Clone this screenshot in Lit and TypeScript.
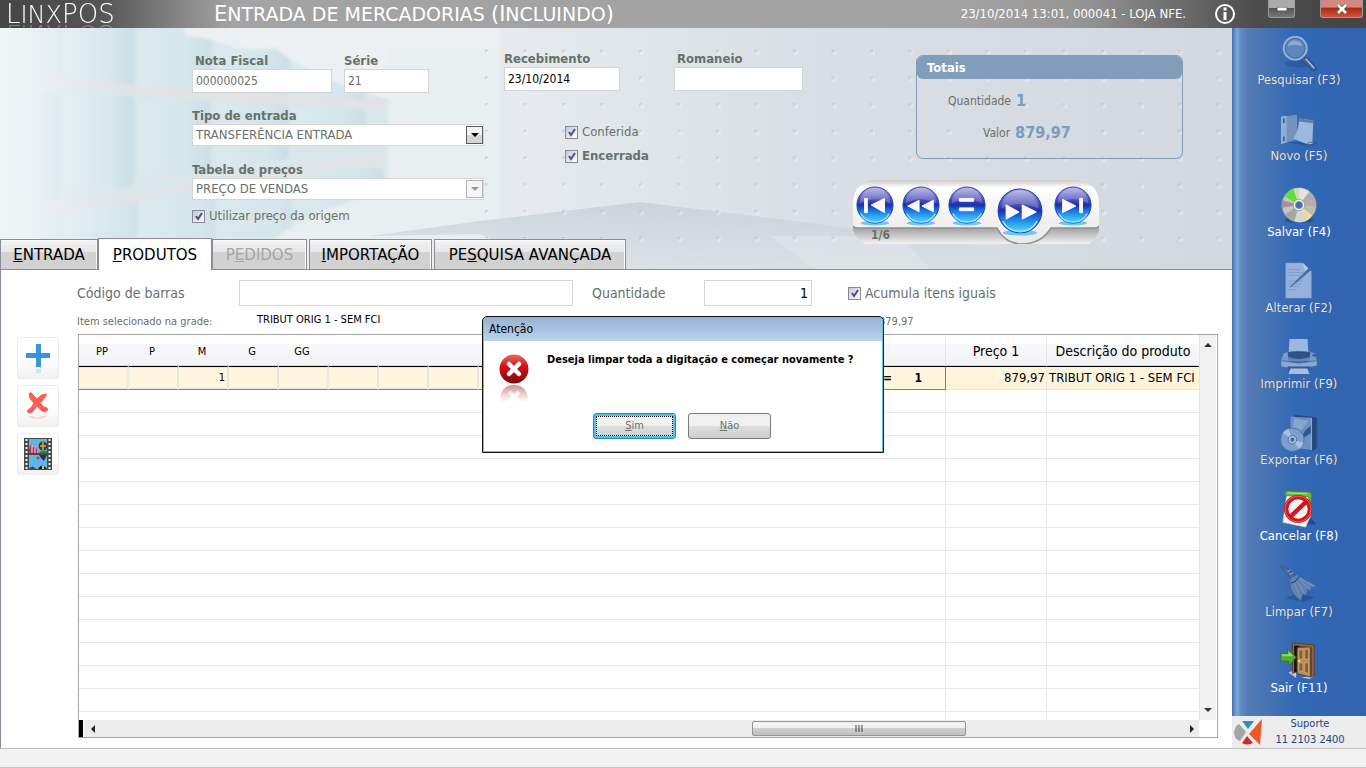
import { LitElement, html, svg, css } from "lit";
import { customElement } from "lit/decorators.js";
import { classMap } from "lit/directives/class-map.js";

const actions = [
  { id: "search", label: "Pesquisar (F3)", on: false },
  { id: "new", label: "Novo (F5)", on: false },
  { id: "save", label: "Salvar (F4)", on: true },
  { id: "edit", label: "Alterar (F2)", on: false },
  { id: "print", label: "Imprimir (F9)", on: false },
  { id: "export", label: "Exportar (F6)", on: false },
  { id: "cancel", label: "Cancelar (F8)", on: true },
  { id: "clear", label: "Limpar (F7)", on: false },
  { id: "exit", label: "Sair (F11)", on: true },
];

const icons: Record<string, unknown> = {
  search: svg`
    <ellipse cx="19" cy="31" rx="14" ry="4" fill="#1d4583" opacity=".35"/>
    <path d="M24 25 L28 24 L39 36 L36 39 L32 37 L23 28z" fill="#3c5f93" stroke="#27466f" stroke-width=".8"/>
    <path d="M27 26 L36 36" stroke="#a9c1df" stroke-width="1.6"/>
    <circle cx="16" cy="15" r="12" fill="#5c86bf" stroke="#8fafd6" stroke-width="2.4"/>
    <circle cx="16" cy="15" r="10.4" fill="none" stroke="#3c66a3" stroke-width=".9"/>
    <path d="M8 13 Q10 6 17 7 Q24 8 23 13 Q15 10 8 13z" fill="#a5c0e2" opacity=".6"/>`,
  new: svg`
    <path d="M6 34 L34 38 L40 34z" fill="#1f467f" opacity=".6"/>
    <path d="M1 7 L18 5 L18 31 L1 36z" fill="#7293c0"/>
    <path d="M18 5 L36 8 L36 36 L18 31z" fill="#3f68a5"/>
    <path d="M1 7 L7 6 L7 34 L1 36z" fill="#8faed6"/>
    <path d="M4 9 V33" stroke="#34547f" stroke-width="1.6" stroke-dasharray="5 14"/>
    <path d="M20 9 L35 11 L34 36 L29 36 Q20 33 14 30 Q20 22 20 9z" fill="#9bb8df"/>
    <path d="M20 9 L35 11 V14 L20 12z" fill="#5e80b0"/>
    <path d="M28 36 Q30 33 34 34" stroke="#44699f" fill="none"/>`,
  save: svg`
    <ellipse cx="20" cy="36" rx="15" ry="3" fill="#123768" opacity=".5"/>
    <circle cx="20" cy="20" r="18" fill="#c6c7c4" stroke="#8d9290"/>
    <path d="M20 20 L5 11 A18 18 0 0 1 14 3z" fill="#5fe238"/>
    <path d="M20 20 L14 3 A18 18 0 0 1 20 2z" fill="#cfd9b8"/>
    <path d="M20 20 L20 2 A18 18 0 0 1 31 6z" fill="#e2e2e1"/>
    <path d="M20 20 L31 6 A18 18 0 0 1 37 14z" fill="#adaeac"/>
    <path d="M20 20 L37 14 A18 18 0 0 1 38 22z" fill="#c2a6ae"/>
    <path d="M20 20 L38 22 A18 18 0 0 1 34 31z" fill="#b4c0ac"/>
    <path d="M20 20 L34 31 A18 18 0 0 1 27 37z" fill="#f3d9a4"/>
    <path d="M20 20 L27 37 A18 18 0 0 1 15 37z" fill="#d6d6d4"/>
    <path d="M20 20 L15 37 A18 18 0 0 1 5 30z" fill="#a6a8a6"/>
    <path d="M20 20 L2 23 A18 18 0 0 1 3 15z" fill="#a8909a"/>
    <circle cx="20" cy="20" r="6" fill="#f2f2f2" stroke="#8a8e90" stroke-width=".7"/>
    <circle cx="20" cy="20" r="3.8" fill="#3d6fb5" stroke="#7d8fa8" stroke-width=".7"/>`,
  edit: svg`
    <path d="M6 1 H24 L33 10 V38 H6z" fill="#95b2dc" stroke="#7798c8" stroke-width=".6"/>
    <path d="M24 1 L26 9 L33 10z" fill="#b5cbe8"/>
    <path d="M9 8 H22 M9 11 H24 M9 14 H21 M9 20 H24 M9 23 H22 M9 26 H20 M9 29 H17" stroke="#7e9cca" stroke-width="1"/>
    <path d="M11 26 L31 6 L34 5 L33 8 L14 24z" fill="#4a6da3" stroke="#34568b" stroke-width=".6"/>`,
  print: svg`
    <path d="M10 1 H29 L30 18 H9z" fill="#9ab7de"/>
    <path d="M4 16 L10 14 H30 L36 16 L39 24 H1z" fill="#7a9ac9"/>
    <path d="M8 15 Q19 13 32 15 L31 22 Q20 28 9 22z" fill="#2f5185"/>
    <path d="M9 20 Q20 24 31 20 L31 23 Q20 27 9 23z" fill="#6586b4"/>
    <path d="M1 24 L9 25 Q20 28 31 25 L39 24 V29 Q20 35 1 30z" fill="#89a8d4" stroke="#4c6fa4" stroke-width=".6"/>
    <path d="M34 18 l3 1" stroke="#2c4c7e" stroke-width="1.6"/>
    <path d="M8 30 H32 L31 34 H9z" fill="#37598c"/>
    <path d="M11 32 H29 L31 38 H9z" fill="#a4bfe3"/>`,
  export: svg`
    <path d="M15 1 L34 3 L39 4 V36 L33 39z" fill="#25487f"/>
    <path d="M11 3 L33 4 V38 L11 35z" fill="#6d91c4"/>
    <path d="M15 5 L30 7 L18 22 H12z" fill="#8cabd6" opacity=".8"/>
    <path d="M22 27 Q24 17 33 12 V20 Q27 23 22 27z" fill="#30568f"/>
    <path d="M33 4 V38" stroke="#a1bbdd"/>
    <circle cx="13" cy="27" r="12.4" fill="#7d9ece" stroke="#4d72a8"/>
    <path d="M13 27 L3 20 A12 12 0 0 1 9 15.500z M13 27 L25 30 A12 12 0 0 1 20 37z" fill="#a7c0e2"/>
    <circle cx="13" cy="27" r="4.500" fill="#a7c0e2" stroke="#50719f"/>
    <circle cx="13" cy="27" r="2.200" fill="#3d68a8"/>`,
  cancel: svg`
    <path d="M10 36 L38 36 L33 30z" fill="#14386e" opacity=".6"/>
    <path d="M7 5 H32 V28 L27 39 L3 34z" fill="#f1f2ef" stroke="#b9bdb9" stroke-width=".6"/>
    <path d="M5 28 L3 34 L27 39 L29 33z" fill="#fff" stroke="#b9bdb9" stroke-width=".6"/>
    <path d="M10 12 H28 M10 16 H28 M9 20 H28 M9 24 H28" stroke="#d2d6d2"/>
    <path d="M7 1 L30 2 Q35 3 33 9 L32 18 L30 7 L6 6 Q4 3 7 1z" fill="#69b93d" stroke="#3f8a22" stroke-width=".8"/>
    <path d="M8 3 L29 4" stroke="#b7e28f" stroke-width="1.200"/>
    <circle cx="19" cy="20" r="12.500" fill="#fff" fill-opacity=".4" stroke="#d3161d" stroke-width="4.600"/>
    <circle cx="19" cy="20" r="13.600" fill="none" stroke="#f17a72" stroke-width=".8"/>
    <path d="M11 28 L28 12" stroke="#d3161d" stroke-width="4.600"/>`,
  clear: svg`
    <path d="M6 34 L24 38 L36 33 L20 28z" fill="#1d437c" opacity=".5"/>
    <path d="M1 1 L4 0 L16 10 L13 14z" fill="#4d6c9a" stroke="#2e4e80" stroke-width=".7"/>
    <path d="M8 6 L11 4 M10 9 L14 7" stroke="#91abd0"/>
    <path d="M11 13 L18 9 Q26 15 38 20 L36 23 L33 22 L33 26 L29 25 L28 31 L24 30 L22 37 Q11 29 10 18z" fill="#6181b1" stroke="#3c5f95" stroke-width=".7"/>
    <path d="M14 16 L21 33 M17 15 L26 29 M19 13 L31 24 M21 13 L35 21" stroke="#7b99c4" stroke-width="1"/>
    <path d="M11 18 Q17 17 20 11" stroke="#2f5083" fill="none" stroke-width="1.500"/>`,
  exit: svg`
    <path d="M9 32 L17 29 V38z M22 37 L36 36 L31 39z" fill="#c5c8cf"/>
    <path d="M13 1 L36 3 V35 L33 37 V6 L16 4 V32 L13 33z" fill="#946439" stroke="#4c2f17" stroke-width=".7"/>
    <path d="M15 4 L20 4 V32 H15z" fill="#101010"/>
    <path d="M18 6 L32 5 V37 L18 33z" fill="#bd8d5d" stroke="#62401f" stroke-width=".9"/>
    <path d="M20 9 L24 8 V18 L20 18z M26 8 L30 8 V18 L26 18z M20 22 H24 V31 L20 30z M26 22 H30 V33 L26 32z" fill="#8a5e34" stroke="#dbb48a" stroke-width=".6"/>
    <circle cx="20" cy="20" r="1.200" fill="#f0e2c8"/>
    <path d="M1 12 H8 V7 L17 16 L9 25 V20 H1z" fill="#4fae2b" stroke="#2b7a13" stroke-width=".8"/>
    <path d="M2 13 H9 V10 L14 15 H2z" fill="#93da6c"/>`,
};

const navGlyphs = [
  { name: "Primeiro", big: false, g: svg`<path d="M9 13h3v15h-3z M30 13v15L16 20z"/>` },
  { name: "Anterior", big: false, g: svg`<path d="M18 15v12L6 21z M33 15v12L21 21z"/>` },
  { name: "Lista", big: false, g: svg`<path d="M12 13h15v3H12z M12 23h15v3H12z"/>` },
  { name: "Próximo", big: true, g: svg`<path d="M8 15v12L19 21z M22 15v12L34 21z"/>` },
  { name: "Último", big: false, g: svg`<path d="M9 14v14L23 21z M27 13h3v15h-3z"/>` },
];

const tabs = [
  { cls: "t1", pre: "", key: "E", post: "ntrada" },
  { cls: "t2", pre: "", key: "P", post: "rodutos" },
  { cls: "t3", pre: "P", key: "e", post: "didos" },
  { cls: "t4", pre: "", key: "I", post: "mportação" },
  { cls: "t5", pre: "Pe", key: "s", post: "quisa Avançada" },
];

@customElement("app-root")
export class AppRoot extends LitElement {
  static styles = css`
    :host {
      display: flex;
      flex-direction: column;
      height: 100vh;
      overflow: hidden;
      background: #fff;
      color: #68706a;
      font: 12px/16px "DejaVu Sans Condensed", "Noto Sans", sans-serif;
    }
    * { box-sizing: border-box; }
    button, input, select { font: inherit; color: inherit; margin: 0; border-radius: 0; }
    button { padding: 0; border: 0; background: none; }
    svg { display: block; }
    .wide { font-family: "DejaVu Sans", sans-serif; text-transform: uppercase; white-space: nowrap; }
    .tabs button { text-transform: inherit; }

    .titlebar {
      display: flex;
      align-items: center;
      height: 28px;
      flex: none;
      color: #fff;
      background: linear-gradient(90deg, #454545 0, #555 100px, #a3a3a3 230px, #a3a3a3 calc(100% - 400px), #949494 calc(100% - 280px), #4c4c4c calc(100% - 110px), #444);
    }
    .brand {
      width: 206px;
      padding-left: 6px;
      font-family: "DejaVu Sans Light", "DejaVu Sans", sans-serif;
      font-weight: 200;
      font-size: 26px;
      line-height: 22px;
      height: 22px;
      -webkit-box-reflect: below -2px linear-gradient(transparent 40%, rgba(255, 255, 255, 0.4));
    }
    .brand span { font-size: 24px; }
    .title { flex: 1; padding-left: 8px; margin: 0; font-size: 19px; font-weight: 400; line-height: 24px; }
    .title span { font-size: 21px; }
    .session { font-size: 13px; }
    .info { margin: 0 32px 0 28px; }
    .win { align-self: flex-start; display: grid; place-items: center; height: 18px; border: 1px solid #9b9b9b; border-top: 0; border-radius: 0 0 3px 3px; }
    .min { width: 27px; margin-right: 25px; background: linear-gradient(#aaa 45%, #555 50%, #777); }
    .close { width: 43px; margin-right: 3px; background: linear-gradient(#d08a80 40%, #b02a14 50%, #cf523c); }

    .body { flex: 1; display: flex; min-height: 0; }
    .main { flex: 1; display: flex; flex-direction: column; min-width: 0; }
    .top { position: relative; flex: none; height: 242px; }
    .scene { position: absolute; inset: 0; width: 100%; height: 100%; }
    .form { position: relative; display: flex; padding-left: 192px; }
    .colA { width: 292px; margin: 25px 20px 0 0; }
    .colB { width: 299px; margin: 23px 50px 0 0; }
    .row { display: flex; }
    .field { display: flex; flex-direction: column; }
    .field label { font-weight: 700; font-size: 13px; line-height: 16px; padding-left: 3px; }
    .field.flush label { padding-left: 0; }
    .txt { height: 24px; border: 1px solid #d5d5d8; background: #fff; padding: 0 3px; width: 100%; }
    .nota { width: 140px; margin-right: 12px; }
    .serie { width: 85px; }
    .nota, .serie { margin-bottom: 15px; }
    .serie label, .rec label { padding-left: 0; }
    .rec { width: 116px; margin-right: 54px; }
    .rom { width: 129px; }
    .black { color: #000; }
    .combo { position: relative; margin-bottom: 16px; }
    .combo select { appearance: none; width: 100%; height: 22px; border: 1px solid #d5d5d8; background: #fff; padding: 0 24px 0 3px; opacity: 1; color: #68706a; font-size: 13px; }
    .arrow { position: absolute; right: 1px; top: 2px; width: 17px; height: 18px; border: 1px solid #5c5c5c; background: linear-gradient(#f4f4f4 50%, #d6d6d6 50%); display: grid; place-items: center; pointer-events: none; }
    .arrow.off { border-color: #b5b5b5; background: #f5f5f5; }
    .check { display: flex; align-items: center; gap: 4px; font-size: 13px; }
    .check.low { margin-top: -8px; }
    .check.item { font-size: 14px; }
    .check input {
      appearance: none;
      width: 13px;
      height: 13px;
      border: 1px solid #8a8a8a;
      background: url("data:image/svg+xml,%3Csvg xmlns='http://www.w3.org/2000/svg' viewBox='0 0 11 11'%3E%3Cpath d='M3 5l2 3 4-6' fill='none' stroke='%233f519b' stroke-width='2'/%3E%3C/svg%3E") center / 11px no-repeat, linear-gradient(135deg, #c2c8d2, #fff);
    }
    .checks { display: flex; flex-direction: column; gap: 8px; padding: 33px 0 0 61px; }
    .strong { font-weight: 700; }

    .totals { margin: 27px 0 21px 63px; width: 267px; height: 104px; border: 1px solid #7f9cba; border-radius: 7px; }
    .totals h2 { margin: 0; height: 23px; padding-left: 10px; border-radius: 6px; background: #809db9; color: #fff; font-size: 13px; line-height: 24px; }
    .totals dl { display: grid; gap: 12px; margin: 0; padding-top: 12px; }
    .totals div { display: flex; align-items: center; gap: 5px; }
    .totals div + div { padding-left: 35px; }
    .totals dt { padding-left: 31px; }
    .totals dd { margin: 0; font-weight: 700; font-size: 16px; line-height: 20px; color: #7a9cbf; }

    .player { position: relative; width: 246px; height: 64px; margin: 0; padding: 6px 3px 0; display: flex; align-items: flex-start; gap: 8px; }
    .shell { position: absolute; inset: 0; }
    .player button { position: relative; width: 38px; height: 40px; border-radius: 50%; }
    .player .big { width: 46px; height: 50px; margin: 1px 3px 0; }
    .count { position: absolute; left: 18px; bottom: 1px; font-weight: 700; }

    .tabs { position: relative; flex: none; display: flex; align-items: flex-end; height: 32px; margin-top: -32px; border-bottom: 1px solid #8b8b9b; font-size: 15px; color: #000; }
    .tabs button { height: 30px; border: 1px solid #8b8b9b; border-bottom: 0; background: linear-gradient(#f3f3f3 0, #e6e6e6 40%, #d3d3d3 42%, #d0d0d0); line-height: 28px; box-shadow: inset -1px 1px #fbfbfb; }
    .tabs .cur { height: 32px; margin-bottom: -1px; background: #fff; }
    .tabs .off { color: #a5a5a5; }
    .t1 { width: 98px; } .t2 { width: 114px; } .t3 { width: 95px; } .t4 { width: 123px; margin: 0 2px; } .t5 { width: 192px; }

    .work { flex: 1; min-height: 0; display: grid; grid-template-columns: 77px minmax(0, 1fr); grid-template-rows: auto minmax(0, 1fr); border-left: 1px solid #8b8b9b; padding: 10px 14px 10px 0; }
    .head { grid-column: 2; margin-left: -1px; }
    .entry { display: flex; align-items: center; font-size: 14px; height: 26px; }
    .entry .lab { width: 162px; }
    .entry .code { width: 334px; height: 26px; margin-right: 19px; }
    .entry .qlab { width: 112px; }
    .entry .qty { width: 108px; height: 26px; margin-right: 36px; text-align: right; }
    .sel { display: flex; font-size: 11px; height: 28px; align-items: center; padding-top: 3px; }
    .sel span { width: 180px; }
    .sel b { font-weight: 400; color: #000; flex: 0 1 622px; padding-bottom: 3px; }
    .tools { display: flex; flex-direction: column; gap: 6px; padding: 3px 0 0 16px; }
    .tools button { width: 42px; height: 42px; border: 1px solid #ececec; border-radius: 2px; display: grid; place-items: center; background: linear-gradient(#fff 50%, #f1f1f1); }

    .grid { display: grid; grid-template-columns: minmax(0, 1fr) 17px; grid-template-rows: minmax(0, 1fr) 17px; border: 1px solid #a5a5ab; padding-right: 1px; color: #000; }
    .scroll { overflow: hidden; }
    table { width: 100%; table-layout: fixed; border-collapse: separate; border-spacing: 0; }
    .c50 { width: 50px; } .cPrice { width: 101px; } .cDesc { width: 152px; }
    th { height: 31px; padding: 3px 4px 0 0; font-weight: 400; font-size: 11px; border-bottom: 1px solid #d4d4d8; background: linear-gradient(#fff 9px, #f6f8fb 9px, #f1f3f5); }
    th.lg { font-size: 14px; padding: 1px 0 0; }
    th.sep, td.sep { border-right: 1px solid #e6e6e6; }
    td { height: 23px; padding: 0; border-bottom: 1px solid #e9e9e9; }
    .cur td { height: 24px; border-top: 1px solid #000; background: #fff4dc; border-bottom: 1px solid #857f7d; font-size: 13px; }
    .cur .size { border-right: 2px solid #e6e6e8; text-align: right; padding-right: 2px; font-size: 11px; box-shadow: inset 0 1px #e6e6e8, inset 0 -1px #e6e6e8; }
    .cur .sum { text-align: right; font-weight: 700; padding-right: 23px; white-space: pre; border-right-color: #857f7d; font-size: 12px; }
    .cur .price { text-align: right; padding-right: 1px; border-bottom-color: #e6e6e8; white-space: nowrap; }
    .cur .desc { padding-left: 2px; border-bottom-color: #e6e6e8; white-space: nowrap; }
    .vbar { display: flex; flex-direction: column; justify-content: space-between; align-items: center; background: #f0f0f0; border-left: 1px solid #e3e3e3; padding: 6px 0; }
    .hbar { display: flex; align-items: center; background: #ececec; }
    .split { width: 5px; height: 17px; background: #000; border-right: 1px solid #fff; margin-right: 5px; }
    .track { flex: 1; display: flex; justify-content: flex-end; padding-right: 222px; }
    .thumb { width: 214px; height: 15px; border: 1px solid #949494; border-radius: 2px; display: grid; place-items: center; background: linear-gradient(#f2f2f2 45%, #cfcfd2 50%, #bfbfc2); }
    .hend { margin-right: 3px; }

    .side { width: 134px; flex: none; display: flex; flex-direction: column; color: #fff; background: linear-gradient(90deg, #3f70b5 0, #80a8d8 5px, #5f8bc4 9px, #557ab5 16px, #4f78b4 24px, #3168b5 64px, #3263ae 100%); }
    .actions { flex: 1; min-height: 0; display: flex; flex-direction: column; padding-top: 6px; }
    .act { flex: none; height: 76px; display: flex; flex-direction: column; align-items: center; font-size: 13px; color: #fff; }
    .act.dim { color: #dfe5ef; text-shadow: 1px 0 #4a4f5e; }
    .act svg { flex: none; }
    .support { flex: none; display: flex; align-items: center; height: 32px; background: #ececec; color: #1c4484; font-size: 11px; line-height: 16px; }
    .support a { flex: 1; text-align: center; color: inherit; text-decoration: none; padding-right: 8px; }
    .status { height: 20px; flex: none; background: #f1f1f1; border-top: 1px solid #bdbdbd; border-bottom: 1px solid #c4c4c4; }

    .overlay { position: fixed; inset: 0; display: grid; place-items: center; }
    .dialog { width: 402px; height: 137px; border: 1px solid #101010; border-radius: 5px 5px 0 0; background: #fff; color: #000; box-shadow: inset 0 0 0 1px #5ec5e4; overflow: hidden; }
    .dialog h1 { margin: 1px 1px 0; height: 23px; padding-left: 5px; font-size: 12px; font-weight: 400; line-height: 22px; background: linear-gradient(#98b3d3, #bbd2ec); }
    .msg { display: flex; gap: 18px; padding: 13px 0 0 16px; height: 72px; }
    .msg p { margin: -2px 0 0; font-size: 11px; font-weight: 700; }
    .btns { display: flex; justify-content: center; gap: 12px; padding-right: 2px; color: #68706a; }
    .btns button { width: 83px; height: 26px; border: 1px solid #7a7a7a; border-radius: 3px; background: linear-gradient(#f0f0f0 48%, #dedede 50%, #cecece); font-size: 11px; }
    .btns .def { border-color: #3c7fb1; box-shadow: inset 0 0 0 2px #48c8ee; outline: 1px dotted #000; outline-offset: -4px; }
  `;

  private caret(fill: string, dir = "down") {
    const d = { down: "M0 2h8L4 6z", up: "M0 6h8L4 2z", left: "M6 0v8L2 4z", right: "M2 0v8L6 4z" }[dir];
    return html`<svg width="8" height="8" viewBox="0 0 8 8" aria-hidden="true"><path d=${d!} fill=${fill}></path></svg>`;
  }

  private scene() {
    const cols = [0, 62, 138, 216, 292];
    return html`<svg class="scene" viewBox="0 0 1232 242" preserveAspectRatio="none" aria-hidden="true">
      <defs>
        <linearGradient id="sky"><stop offset="0" stop-color="#eaf2f4"/><stop offset=".32" stop-color="#e9edf1"/><stop offset=".42" stop-color="#e6eaee"/><stop offset=".65" stop-color="#d9dfe4"/><stop offset="1" stop-color="#d3d8df"/></linearGradient>
        <linearGradient id="glass"><stop offset="0" stop-color="#dbe9ee"/><stop offset=".7" stop-color="#d4e5eb"/><stop offset="1" stop-color="#cadfe6"/></linearGradient>
        <linearGradient id="fade"><stop offset="0" stop-color="#f0f6f7"/><stop offset="1" stop-color="#f0f6f7" stop-opacity="0"/></linearGradient>
        <linearGradient id="roof" x2="0" y2="1"><stop offset="0" stop-color="#c5ced5"/><stop offset="1" stop-color="#dae0e5"/></linearGradient>
        <pattern id="dots" x="485" y="22" width="38.500" height="26.700" patternUnits="userSpaceOnUse"><path d="M0 3V.500H3" fill="none" stroke="#b5bdc4"/><path d="M1 4h3V1" fill="none" stroke="#f2f5f7"/></pattern>
        <filter id="soft"><feGaussianBlur stdDeviation="1.500"/></filter>
      </defs>
      <rect width="1232" height="242" fill="url(#sky)"/>
      <g filter="url(#soft)">
        <path d="M-5 -5H400V250H-5z" fill="#d9e6ea"/>
        ${cols.map((x, i) => svg`
          <rect x=${x} y="-6" width="73" height=${60 + i * 5} rx="8" fill="url(#glass)"/>
          <rect x=${x} y=${64 + i * 4} width=${i === 0 ? 60 : 73} height=${108 - i * 17} rx="8" fill="url(#glass)"/>
          <rect x=${x} y=${184 - i * 11} width=${i === 0 ? 76 : 92} height="80" rx="8" fill="url(#glass)"/>`)}
        <path d="M-5 56 L60 52 L140 62 L292 72 L390 76" fill="none" stroke="#e3e1e4" stroke-width="8" opacity=".8"/>
        <path d="M-5 180 L70 181 L160 164 L385 128" fill="none" stroke="#e3e1e4" stroke-width="6" opacity=".8"/>
        <path d="M182 -5H500V70H384Q310 50 276 20Q260 22 236 20Q205 8 186 8z" fill="#ecf0f3"/>
        <path d="M388 20 V160 L320 184 L290 200 L240 234 L190 250 H500 V20z" fill="#e9eef1"/>
      </g>
      <rect width="120" height="242" fill="url(#fade)"/>
      <path d="M370 208 L480 193 L640 174 L850 200 L1000 222 V242 H560 L480 206z" fill="url(#roof)" opacity=".75"/>
      <path d="M770 208 H900 L930 242 H815z" fill="#dfe4e9" opacity=".7"/>
      <rect x="484" width="748" height="220" fill="url(#dots)" opacity=".75"/>
    </svg>`;
  }

  private player() {
    return html`<nav class="player" aria-label="Registros">
      <svg class="shell" width="246" height="64" viewBox="0 0 246 64" aria-hidden="true">
        <defs>
          <linearGradient id="sh" x2="0" y2="1"><stop offset="0" stop-color="#c9c9c9"/><stop offset=".12" stop-color="#fff"/><stop offset=".5" stop-color="#f4f4f4"/><stop offset="1" stop-color="#e9e9e9"/></linearGradient>
          <linearGradient id="lo" x2="0" y2="1"><stop offset=".4" stop-color="#aaa"/><stop offset="1" stop-color="#f2f2f2"/></linearGradient>
        </defs>
        <path d="M0 40H246V50Q244 59 236 64H12Q2 58 0 50z" fill="url(#lo)"/>
        <path d="M22 0H222Q246 2 246 24V45Q246 48 241 48H198Q188 64 169 64Q152 64 144 48H5Q0 48 0 45V24Q0 2 22 0z" fill="url(#sh)"/>
        <path d="M0 46Q1 48 5 48H144Q152 64 169 64Q188 64 198 48H241Q245 48 246 46" fill="none" stroke="#8f8f8f" stroke-width="1.500"/>
      </svg>
      ${navGlyphs.map((n) => html`<button class=${classMap({ big: n.big })} aria-label=${n.name}>
        <svg width=${n.big ? 46 : 38} height=${n.big ? 50 : 40} viewBox="0 0 40 42" aria-hidden="true">
          <defs>
            <linearGradient id="orb" x2="0" y2="1"><stop offset="0" stop-color="#b0b0e4"/><stop offset=".3" stop-color="#5a5cc0"/><stop offset=".5" stop-color="#1c2fa8"/><stop offset=".65" stop-color="#1674e0"/><stop offset="1" stop-color="#4fe0ff"/></linearGradient>
          </defs>
          <ellipse cx="20" cy="39" rx="15" ry="2.500" fill="#6cc8f2"/>
          <circle cx="20" cy="20" r="19" fill="url(#orb)" stroke="#2a3cae" stroke-width="1"/>
          <path d="M4 18A16 16 0 0 1 36 18Q28 14 20 14Q12 14 4 18z" fill="#fff" opacity=".2"/>
          <path d="M5 29A17 17 0 0 0 35 29" fill="none" stroke="#a5f0ff" stroke-width="1.500" opacity=".8"/>
          <g fill="#fbf8f4" stroke="#fbf8f4" stroke-linejoin="round">${n.g}</g>
        </svg></button>`)}
      <span class="count">1/6</span>
    </nav>`;
  }

  render() {
    const sizes = ["PP", "P", "M", "G", "GG", "", "", ""];
    return html`
      <header class="titlebar">
        <div class="brand wide">L<span>inx</span>POS</div>
        <h1 class="title wide"><span>E</span>ntrada de mercadorias <span>(I</span>ncluindo<span>)</span></h1>
        <span class="session">23/10/2014 13:01, 000041 - LOJA NFE.</span>
        <button class="info" aria-label="Informações"><svg width="22" height="22" viewBox="0 0 22 22"><circle cx="11" cy="11" r="9" fill="none" stroke="#fff" stroke-width="2"/><path d="M9.500 9h3v8h-3z M9.500 4.500h3v3h-3z" fill="#fff"/></svg></button>
        <button class="win min" aria-label="Minimizar"><svg width="10" height="4" viewBox="0 0 10 4"><path d="M0 0h10v4H0z" fill="#fff" stroke="#555"/></svg></button>
        <button class="win close" aria-label="Fechar"><svg width="12" height="10" viewBox="0 0 12 10"><path d="M2 1l8 8M10 1L2 9" stroke="#553" stroke-width="4"/><path d="M2 1l8 8M10 1L2 9" stroke="#fff" stroke-width="2.600"/></svg></button>
      </header>
      <div class="body">
        <main class="main">
          <section class="top">
            ${this.scene()}
            <div class="form">
              <div class="colA">
                <div class="row">
                  <div class="field nota"><label for="nota">Nota Fiscal</label><input id="nota" class="txt" value="000000025"></div>
                  <div class="field serie"><label for="serie">Série</label><input id="serie" class="txt" value="21"></div>
                </div>
                <div class="field flush"><label for="tipo">Tipo de entrada</label>
                  <div class="combo"><select id="tipo"><option>TRANSFERÊNCIA ENTRADA</option></select><span class="arrow">${this.caret("#000")}</span></div></div>
                <div class="field flush"><label for="tabela">Tabela de preços</label>
                  <div class="combo"><select id="tabela" disabled><option>PREÇO DE VENDAS</option></select><span class="arrow off">${this.caret("#999")}</span></div></div>
                <label class="check low"><input type="checkbox" checked>Utilizar preço da origem</label>
              </div>
              <div class="colB">
                <div class="row">
                  <div class="field rec"><label for="rec">Recebimento</label><input id="rec" class="txt black" value="23/10/2014"></div>
                  <div class="field rom"><label for="rom">Romaneio</label><input id="rom" class="txt"></div>
                </div>
                <div class="checks">
                  <label class="check"><input type="checkbox" checked>Conferida</label>
                  <label class="check strong"><input type="checkbox" checked>Encerrada</label>
                </div>
              </div>
              <div>
                <section class="totals"><h2>Totais</h2>
                  <dl><div><dt>Quantidade</dt><dd>1</dd></div><div><dt>Valor</dt><dd>879,97</dd></div></dl>
                </section>
                ${this.player()}
              </div>
            </div>
          </section>
          <div class="tabs wide" role="tablist">
            ${tabs.map((t, i) => html`<button role="tab" class="${t.cls} ${i === 1 ? "cur" : ""} ${i === 2 ? "off" : ""}" aria-selected=${i === 1} ?disabled=${i === 2}>${t.pre}<u>${t.key}</u>${t.post}</button>`)}
          </div>
          <section class="work">
            <div class="head">
              <div class="entry">
                <label class="lab" for="code">Código de barras</label><input id="code" class="txt code">
                <label class="qlab" for="qty">Quantidade</label><input id="qty" class="txt qty black" value="1">
                <label class="check item"><input type="checkbox" checked>Acumula itens iguais</label>
              </div>
              <div class="sel"><span>Item selecionado na grade:</span><b>TRIBUT ORIG 1 - SEM FCI</b><span>879,97</span></div>
            </div>
            <div class="tools">
              <button aria-label="Adicionar"><svg width="26" height="32" viewBox="0 0 26 32"><path d="M11 2h5v9h9v5h-9v9h-5v-9H1v-5h10z" fill="#3b93dd"/><path d="M11 27h5v4h-5z" fill="#3b93dd" opacity=".2"/></svg></button>
              <button aria-label="Remover"><svg width="26" height="30" viewBox="0 0 26 30"><path d="M4 3Q6 0 8 4L12 8Q16 3 21 3Q23 4 15 12Q19 17 22 17Q24 20 19 21Q16 20 12 15Q9 20 6 22Q1 22 3 19Q7 17 9 12Q4 8 4 3z" fill="#fb6058" stroke="#fb6058"/><path d="M3 25h5l4 2 4-2h6l-5 3H8z" fill="#fb6058" opacity=".2"/></svg></button>
              <button aria-label="Foto"><svg width="28" height="32" viewBox="0 0 28 32"><path d="M0 0h28v32H0z" fill="#4a4a44"/><path d="M2.500 1V32M25.500 1V32" stroke="#f2f2ea" stroke-width="2" stroke-dasharray="2 2"/><path d="M5 1h18v14H5zM5 17h18v14H5z" fill="#5ab9ea"/><path d="M5 15V11l2-5 2 4 2-4 2 6v3z" fill="#cf2f4e"/><path d="M8 7v8M11 7v8" stroke="#e9d7f0"/><circle cx="19" cy="8" r="4.500" fill="#39432c"/><path d="M16 8h6M19 4v8" stroke="#f2a52e" stroke-width="1.500"/><path d="M15 15l2-2h6v2z" fill="#3f7f39"/><path d="M15 17h8l-3 6-3-3z" fill="#3a2c2c"/><circle cx="14" cy="20" r="1.500" fill="#d8383c"/><path d="M5 31q3-5 7 0z" fill="#3c3f6c"/><path d="M14 31q4-7 9 0z" fill="#1a1718"/><path d="M18 31v-3h2v3z" fill="#f2b82e"/></svg></button>
            </div>
            <div class="grid">
              <div class="scroll"><table>
                <colgroup>${sizes.map(() => html`<col class="c50">`)}<col><col class="cPrice"><col class="cDesc"></colgroup>
                <thead><tr>${sizes.map((s) => html`<th>${s}</th>`)}<th class="sep"></th><th class="lg sep">Preço 1</th><th class="lg">Descrição do produto</th></tr></thead>
                <tbody>
                  <tr class="cur">${sizes.map((s) => html`<td class="size">${s === "M" ? "1" : ""}</td>`)}<td class="sum sep">=      1</td><td class="price sep">879,97</td><td class="desc">TRIBUT ORIG 1 - SEM FCI</td></tr>
                  ${Array.from({ length: 40 }, () => html`<tr><td colspan="9" class="sep"></td><td class="sep"></td><td></td></tr>`)}
                </tbody>
              </table></div>
              <div class="vbar">${this.caret("#333", "up")}${this.caret("#333")}</div>
              <div class="hbar"><span class="split"></span>${this.caret("#222", "left")}<div class="track"><div class="thumb"><svg width="9" height="7" viewBox="0 0 9 7"><path d="M1 0v7M4 0v7M7 0v7" stroke="#444"/></svg></div></div><span class="hend">${this.caret("#222", "right")}</span></div>
            </div>
          </section>
        </main>
        <aside class="side">
          <div class="actions">
            ${actions.map((a) => html`<button class=${classMap({ act: true, dim: !a.on })}><svg width="38" height="38" viewBox="0 0 40 40" aria-hidden="true">${icons[a.id]}</svg>${a.label}</button>`)}
          </div>
          <div class="support">
            <svg width="30" height="30" viewBox="0 0 30 30" aria-hidden="true"><path d="M10 4h12l-6 8z" fill="#2f8fc4"/><path d="M7 7l7 8-6 9Q2 22 2 15Q3 9 7 7z" fill="#a3a5a7"/><path d="M30 2L28 28 17 17z" fill="#ea5b25"/><path d="M15 19l6 7q-6 3-11 0z" fill="#d32b2b"/></svg>
            <a href="tel:1121032400">Suporte<br>11 2103 2400</a>
          </div>
        </aside>
      </div>
      <footer class="status"></footer>
      <div class="overlay"><section class="dialog" role="alertdialog" aria-labelledby="dt" aria-describedby="dm">
        <h1 id="dt">Atenção</h1>
        <div class="msg">
          <svg width="30" height="50" viewBox="0 0 30 50" aria-hidden="true">
            <defs>
              <linearGradient id="red" x2="0" y2="1"><stop offset="0" stop-color="#ee6a66"/><stop offset=".4" stop-color="#d51218"/><stop offset="1" stop-color="#7c0508"/></linearGradient>
              <linearGradient id="ref" x2="0" y2="1"><stop offset="0" stop-color="#a33" stop-opacity=".55"/><stop offset="1" stop-color="#c55" stop-opacity="0"/></linearGradient>
            </defs>
            <circle cx="15" cy="15" r="14.500" fill="url(#red)"/>
            <path d="M10 10l10 10M20 10L10 20" stroke="#fff" stroke-width="4.500" stroke-linecap="round"/>
            <path d="M1 48Q1 31 15 31Q29 31 29 48z" fill="url(#ref)"/>
            <path d="M10 38l10 10M20 38L10 48" stroke="#fff" stroke-width="4" opacity=".8"/>
          </svg>
          <p id="dm">Deseja limpar toda a digitação e começar novamente ?</p>
        </div>
        <div class="btns"><button class="def"><u>S</u>im</button><button><u>N</u>ão</button></div>
      </section></div>`;
  }
}
